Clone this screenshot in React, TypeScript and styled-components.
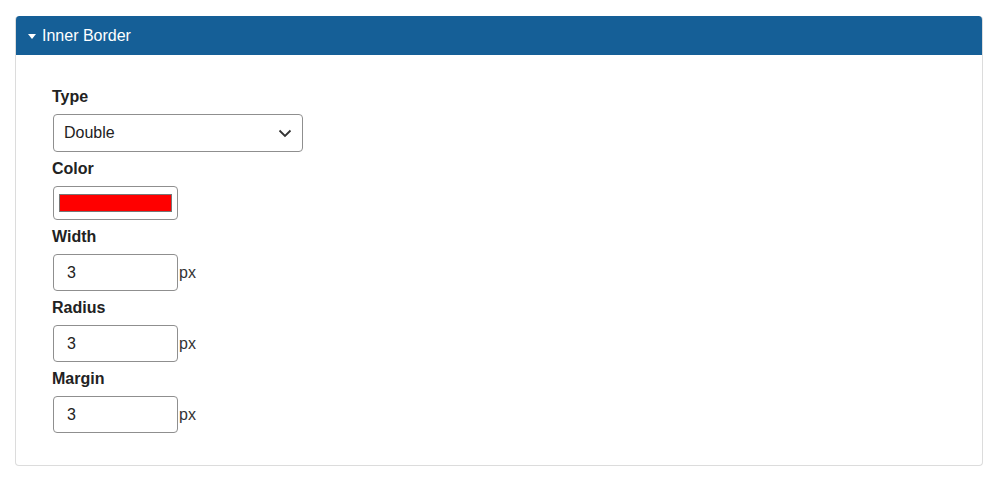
import React, { useState } from 'react'
import styled, { createGlobalStyle } from 'styled-components'

const Global = createGlobalStyle`
  body {
    margin: 0;
    background: #fff;
    font-family: 'Liberation Sans', Arial, sans-serif;
    color: #212529;
  }
`

const Page = styled.div`
  padding: 16px 16px 0 15px;
`

const Panel = styled.section`
  width: 968px;
  box-sizing: border-box;
  border: 1px solid #dcdcdc;
  border-top: none;
  border-radius: 4px;
  background: #fff;
  overflow: hidden;
`

const Header = styled.div`
  display: flex;
  align-items: center;
  gap: 6px;
  height: 39px;
  margin: 0 -1px;
  padding: 0 13px;
  background: #155f97;
  color: #fff;
  font-size: 16px;
  border-radius: 4px 4px 0 0;
`

const Caret = styled.span`
  width: 0;
  height: 0;
  margin-top: 1px;
  border-left: 4.5px solid transparent;
  border-right: 4.5px solid transparent;
  border-top: 5px solid #fff;
`

const Body = styled.div`
  display: flex;
  flex-direction: column;
  align-items: flex-start;
  padding: 31px 36px 32px 36px;
`

const Label = styled.label`
  display: block;
  font-weight: bold;
  font-size: 16px;
  line-height: 22px;
  margin-bottom: 6px;
  color: #222;
`

const Field = styled.div<{ last?: boolean }>`
  margin-bottom: ${p => (p.last ? 0 : 6)}px;
`

const SelectBox = styled.div`
  width: 250px;
  height: 38px;
  margin-left: 1px;
  box-sizing: border-box;
  border: 1px solid #8f8f8f;
  border-radius: 4px;
  display: flex;
  align-items: center;
  justify-content: space-between;
  padding: 0 10px;
  font-size: 16px;
  color: #222;
`

const ColorBox = styled.div`
  width: 125px;
  height: 34px;
  margin-left: 1px;
  box-sizing: border-box;
  border: 1px solid #8f8f8f;
  border-radius: 4px;
  padding: 7px 5px;
  display: flex;
`

const Swatch = styled.div<{ color: string }>`
  flex: 1;
  background: ${p => p.color};
  border: 1px solid #777;
`

const Row = styled.div`
  display: flex;
  align-items: center;
  gap: 1px;
  margin-left: 1px;
`

const NumInput = styled.input`
  width: 125px;
  height: 37px;
  box-sizing: border-box;
  border: 1px solid #8f8f8f;
  border-radius: 4px;
  padding: 0 13px;
  font-family: 'Liberation Sans', Arial, sans-serif;
  font-size: 16px;
  color: #222;
  outline: none;
`

const Unit = styled.span`
  font-size: 16px;
  color: #333;
`

const Chevron = () => (
  <svg width="14" height="9" viewBox="0 0 14 9">
    <path d="M1.5 1.5 L7 7 L12.5 1.5" fill="none" stroke="#333" strokeWidth="1.8" />
  </svg>
)

export default function App() {
  const [vals, setVals] = useState({ width: '3', radius: '3', margin: '3' })
  const fields: [keyof typeof vals, string][] = [
    ['width', 'Width'],
    ['radius', 'Radius'],
    ['margin', 'Margin'],
  ]
  return (
    <Page>
      <Global />
      <Panel>
        <Header>
          <Caret />
          Inner Border
        </Header>
        <Body>
          <Field>
            <Label>Type</Label>
            <SelectBox>
              <span>Double</span>
              <Chevron />
            </SelectBox>
          </Field>
          <Field>
            <Label>Color</Label>
            <ColorBox>
              <Swatch color="#ff0000" />
            </ColorBox>
          </Field>
          {fields.map(([key, label], i) => (
            <Field key={key} last={i === fields.length - 1}>
              <Label>{label}</Label>
              <Row>
                <NumInput
                  value={vals[key]}
                  onChange={e => setVals({ ...vals, [key]: e.target.value })}
                />
                <Unit>px</Unit>
              </Row>
            </Field>
          ))}
        </Body>
      </Panel>
    </Page>
  )
}
